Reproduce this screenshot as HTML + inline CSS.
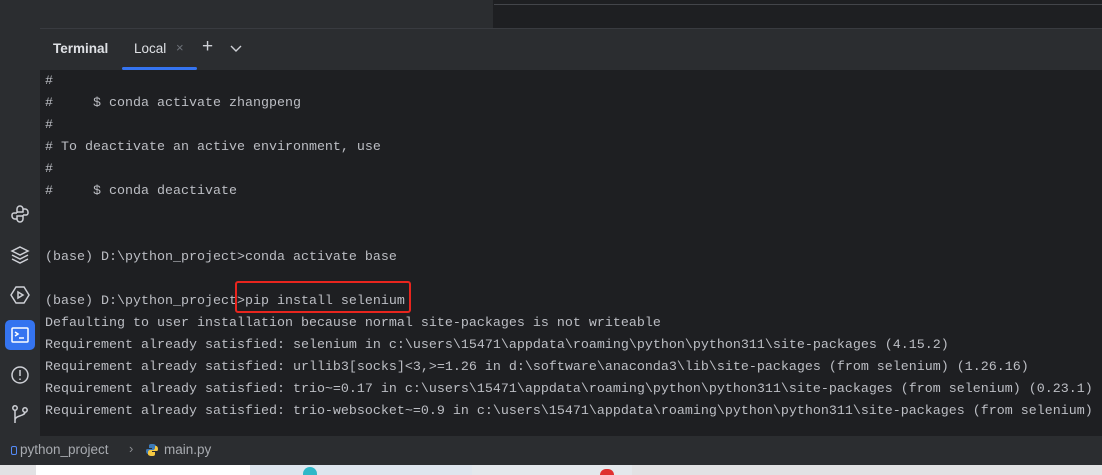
<!DOCTYPE html>
<html><head><meta charset="utf-8"><style>
*{margin:0;padding:0;box-sizing:border-box}
body{width:1102px;height:475px;overflow:hidden;background:#1e1f22;position:relative;font-family:"Liberation Sans",sans-serif}
.abs{position:absolute}
.term{position:absolute;left:45px;top:71px;font-family:"Liberation Mono",monospace;font-size:13.33px;color:#bcbec4;white-space:pre;line-height:22px}
.ic{position:absolute;left:9px;width:22px;height:22px}
</style></head><body>
<div class="abs" style="left:0;top:0;width:40px;height:436px;background:#2b2d30"></div>
<div class="abs" style="left:40px;top:0;width:453px;height:28px;background:#2b2d30"></div>
<div class="abs" style="left:493px;top:0;width:609px;height:28px;background:#1e1f22"></div>
<div class="abs" style="left:494px;top:4px;width:608px;height:1px;background:#43454a"></div>
<div class="abs" style="left:40px;top:28px;width:1062px;height:1px;background:#393b40"></div>
<div class="abs" style="left:40px;top:29px;width:1062px;height:41px;background:#2b2d30"></div>
<div class="abs" style="left:53px;top:41px;font-size:13.5px;color:#dfe1e5;font-weight:bold">Terminal</div>
<div class="abs" style="left:134px;top:41px;font-size:13.5px;color:#dfe1e5">Local</div>
<div class="abs" style="left:176px;top:40px;font-size:13px;color:#6f737a">×</div>
<div class="abs" style="left:202px;top:36px;font-size:19px;color:#ced0d6">+</div>
<svg class="abs" style="left:229px;top:43px" width="14" height="10"><path d="M2 3l5 5 5-5" stroke="#ced0d6" stroke-width="1.4" fill="none"/></svg>
<div class="abs" style="left:122px;top:67px;width:75px;height:3px;background:#3574f0;border-radius:2px"></div>
<div class="term">#
#     $ conda activate zhangpeng
#
# To deactivate an active environment, use
#
#     $ conda deactivate


(base) D:\python_project&gt;conda activate base

(base) D:\python_project&gt;pip install selenium
Defaulting to user installation because normal site-packages is not writeable
Requirement already satisfied: selenium in c:\users\15471\appdata\roaming\python\python311\site-packages (4.15.2)
Requirement already satisfied: urllib3[socks]&lt;3,&gt;=1.26 in d:\software\anaconda3\lib\site-packages (from selenium) (1.26.16)
Requirement already satisfied: trio~=0.17 in c:\users\15471\appdata\roaming\python\python311\site-packages (from selenium) (0.23.1)
Requirement already satisfied: trio-websocket~=0.9 in c:\users\15471\appdata\roaming\python\python311\site-packages (from selenium)</div>
<div class="abs" style="left:235px;top:281px;width:176px;height:32px;border:2px solid #e8251e;border-radius:3px"></div>
<svg class="ic" style="top:203px" viewBox="0 0 22 22" fill="none" stroke="#ced0d6" stroke-width="1.5"><path d="M8 10V6a3 3 0 0 1 3-3h0a3 3 0 0 1 3 3v3H8M8 10H5a2 2 0 0 0-2 2v1a3 3 0 0 0 3 3h2M14 12v4a3 3 0 0 1-3 3h0a3 3 0 0 1-3-3v-3h6M14 12h3a2 2 0 0 0 2-2v-1a3 3 0 0 0-3-3h-2"/></svg>
<svg class="ic" style="top:244px" viewBox="0 0 22 22" fill="none" stroke="#ced0d6" stroke-width="1.5"><path d="M11 3l8 4-8 4-8-4zM3 11l8 4 8-4M3 15l8 4 8-4"/></svg>
<svg class="ic" style="top:284px" viewBox="0 0 22 22" fill="none" stroke="#ced0d6" stroke-width="1.5"><path d="M7 3h8l5 8-5 8H7l-5-8z"/><path d="M9 8l5 3-5 3z"/></svg>
<div class="abs" style="left:5px;top:320px;width:30px;height:30px;background:#3574f0;border-radius:5px"></div>
<svg class="ic" style="top:324px" viewBox="0 0 22 22" fill="none" stroke="#fff" stroke-width="1.5"><rect x="3" y="4" width="16" height="14" rx="1"/><path d="M6 8l3 2-3 2M10 14h5"/></svg>
<svg class="ic" style="top:364px" viewBox="0 0 22 22" fill="none" stroke="#ced0d6" stroke-width="1.5"><circle cx="11" cy="11" r="8"/><path d="M11 6v6M11 14.5v1.5"/></svg>
<svg class="ic" style="top:403px" viewBox="0 0 22 22" fill="none" stroke="#ced0d6" stroke-width="1.5"><circle cx="6" cy="5" r="2.2"/><circle cx="16" cy="7" r="2.2"/><path d="M6 7.2V20M16 9.2c0 4-10 3-10 8"/></svg>
<div class="abs" style="left:0;top:436px;width:1102px;height:29px;background:#2b2d30"></div>
<div class="abs" style="left:11px;top:446px;width:6px;height:9px;border:1.3px solid #548af7;border-radius:2px"></div>
<div class="abs" style="left:20px;top:442px;font-size:13.5px;color:#a8abb0">python_project</div>
<div class="abs" style="left:129px;top:441px;font-size:13px;color:#8c8f94">›</div>
<svg class="abs" style="left:145px;top:443px" width="14" height="14"><path d="M7 1C4 1 4 2 4 3v2h3v1H2C1 6 1 8 1 8s0 3 2 3h1V9c0-1 1-2 2-2h3c1 0 2-1 2-2V3c0-1-1-2-4-2z" fill="#3d7ab8"/><path d="M7 13c3 0 3-1 3-2V9H7V8h5c1 0 1-2 1-2s0-3-2-3h-1v2c0 1-1 2-2 2H5C4 7 3 8 3 9v2c0 1 1 2 4 2z" fill="#f5c842"/></svg>
<div class="abs" style="left:164px;top:442px;font-size:13.5px;color:#a8abb0">main.py</div>
<div class="abs" style="left:0;top:465px;width:1102px;height:10px;background:#e2e2e4"></div>
<div class="abs" style="left:36px;top:465px;width:214px;height:10px;background:#fff"></div>
<div class="abs" style="left:250px;top:465px;width:222px;height:10px;background:#dfe6ee"></div>
<div class="abs" style="left:472px;top:465px;width:160px;height:10px;background:#e4e8ec"></div>
<div class="abs" style="left:600px;top:469px;width:14px;height:6px;background:#e03030;border-radius:7px 7px 0 0"></div>
<div class="abs" style="left:303px;top:467px;width:14px;height:8px;background:#30b8c8;border-radius:7px 7px 0 0"></div>
</body></html>
